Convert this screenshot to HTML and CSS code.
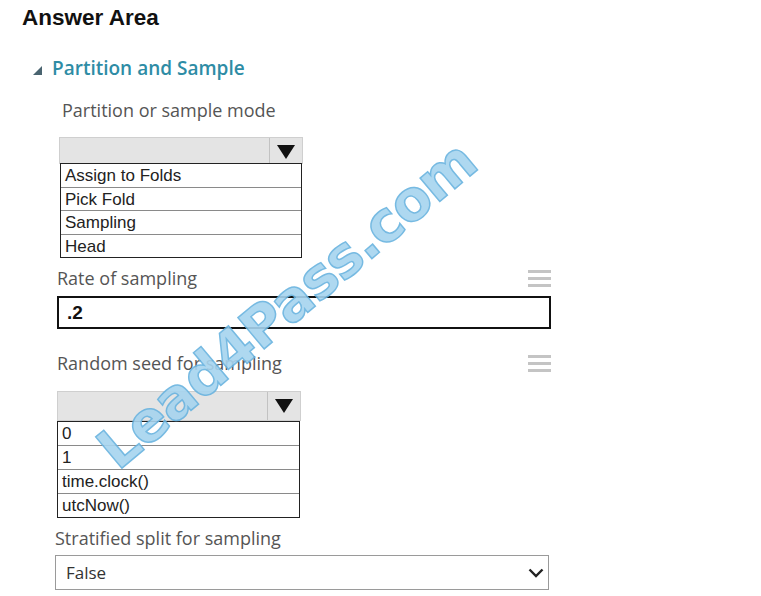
FILE: index.html
```html
<!DOCTYPE html>
<html lang="en">
<head>
    <meta charset="UTF-8">
    <meta name="viewport" content="width=device-width, initial-scale=1.0">
    <title>Answer Area</title>
    <link rel="stylesheet" href="styles.css">
</head>
<body>
    <main class="answer-area">
        <h1 class="title">Answer Area</h1>
        <section class="module">
            <h2 class="module-name"><span class="caret"></span>Partition and Sample</h2>

            <div class="field field-mode">
                <div class="field-label">Partition or sample mode</div>
                <div class="pick pick-mode">
                    <div class="pick-head"><span class="pick-arrow"></span></div>
                    <ul class="pick-list">
                        <li>Assign to Folds</li>
                        <li>Pick Fold</li>
                        <li>Sampling</li>
                        <li>Head</li>
                    </ul>
                </div>
            </div>

            <div class="field field-rate">
                <div class="field-row">
                    <div class="field-label">Rate of sampling</div>
                    <span class="menu-icon"><i></i><i></i><i></i></span>
                </div>
                <div class="text-box">.2</div>
            </div>

            <div class="field field-seed">
                <div class="field-row">
                    <div class="field-label">Random seed for sampling</div>
                    <span class="menu-icon"><i></i><i></i><i></i></span>
                </div>
                <div class="pick pick-seed">
                    <div class="pick-head"><span class="pick-arrow"></span></div>
                    <ul class="pick-list">
                        <li>0</li>
                        <li>1</li>
                        <li>time.clock()</li>
                        <li>utcNow()</li>
                    </ul>
                </div>
            </div>

            <div class="field field-split">
                <div class="field-label">Stratified split for sampling</div>
                <div class="select-box">
                    <span>False</span>
                    <svg class="chevron" width="16" height="10" viewBox="0 0 16 10">
                        <path d="M1.5 1.5 L8 8 L14.5 1.5" fill="none" stroke="#222" stroke-width="2.4"/>
                    </svg>
                </div>
            </div>
        </section>
        <div class="stamp">Lead4Pass.com</div>
    </main>
</body>
</html>
```

FILE: styles.css
```css
* {
    box-sizing: border-box;
}
body {
    margin: 0;
    background: #fff;
    font-family: "Open Sans", "Noto Sans", sans-serif;
}
.answer-area {
    position: relative;
    width: 761px;
    height: 596px;
    overflow: hidden;
    padding: 4px 0 0 22px;
}
.title {
    margin: 0;
    font-family: "Liberation Sans", Arial, sans-serif;
    font-size: 22.5px;
    font-weight: bold;
    color: #111;
    line-height: 28px;
}
.module {
    padding-left: 11px;
}
.module-name {
    display: flex;
    align-items: center;
    margin: 24px 0 0;
    font-size: 19px;
    font-weight: 600;
    color: #2e8ca5;
    line-height: 24px;
}
.caret {
    width: 0;
    height: 0;
    margin: 4px 10px 0 0;
    border-left: 9px solid transparent;
    border-bottom: 9px solid #4a6470;
}

/* fields */
.field {
    width: 494px;
    margin-left: 24px;
}
.field-label {
    font-size: 18px;
    color: #555;
    line-height: 24px;
}
.field-row {
    display: flex;
    justify-content: space-between;
    align-items: center;
}
.field-mode {
    margin-top: 18px;
}
.field-mode .field-label {
    padding-left: 5px;
}
.field-rate {
    margin-top: 8px;
}
.field-seed {
    margin-top: 22px;
}
.field-split {
    margin-top: 8px;
    margin-left: 22px;
}
.menu-icon {
    display: flex;
    flex-direction: column;
    gap: 4px;
    width: 23px;
}
.menu-icon i {
    display: block;
    height: 3px;
    background: #c4c4c4;
}

/* drop-down pickers */
.pick {
    width: 244px;
    font-family: "Liberation Sans", Arial, sans-serif;
    font-size: 17px;
    color: #222;
}
.pick-mode {
    margin: 15px 0 0 2px;
}
.pick-seed {
    margin-top: 16px;
}
.pick-head {
    display: flex;
    justify-content: flex-end;
    height: 27px;
    background: #e4e4e4;
    border: 1px solid #cfcfcf;
}
.pick-seed .pick-head {
    height: 30px;
}
.pick-arrow {
    position: relative;
    width: 33px;
    border-left: 1px solid #c2c2c2;
}
.pick-arrow::after {
    content: "";
    position: absolute;
    left: 7px;
    top: 7px;
    border-left: 9px solid transparent;
    border-right: 9px solid transparent;
    border-top: 14px solid #111;
}
.pick-list {
    list-style: none;
    margin: -1px 1px 0;
    padding: 0;
    border: 1px solid #222;
    background: #fff;
}
.pick-list li {
    height: 23px;
    padding-left: 4px;
    line-height: 24px;
    border-top: 1px solid #8a8a8a;
}
.pick-list li:first-child {
    border-top: 0;
}
.pick-mode .pick-list li {
    height: 23.5px;
}
.pick-mode .pick-list li:first-child {
    height: 22.5px;
}
.pick-seed .pick-list {
    margin: 0 1px 0 0;
}
.pick-seed .pick-list li {
    height: 24px;
}
.pick-seed .pick-list li:first-child {
    height: 23px;
}

.text-box {
    height: 33px;
    margin-top: 6px;
    padding-left: 8px;
    border: 2px solid #111;
    font-family: "Liberation Sans", Arial, sans-serif;
    font-size: 19px;
    font-weight: bold;
    line-height: 29px;
    color: #111;
}

.select-box {
    display: flex;
    justify-content: space-between;
    align-items: center;
    height: 35px;
    margin-top: 5px;
    padding: 0 4px 0 10px;
    border: 1px solid #9a9a9a;
    font-size: 17px;
    color: #333;
}

/* site stamp laid across the form */
.stamp {
    position: absolute;
    left: 287px;
    top: 305px;
    font-family: "DejaVu Sans", sans-serif;
    font-size: 56px;
    font-weight: bold;
    letter-spacing: -1px;
    line-height: 1;
    color: #a6d4ef;
    -webkit-text-stroke: 1.5px #68b3df;
    opacity: 0.9;
    transform: translate(-50%, -50%) rotate(-40deg);
    white-space: nowrap;
    pointer-events: none;
}
```
